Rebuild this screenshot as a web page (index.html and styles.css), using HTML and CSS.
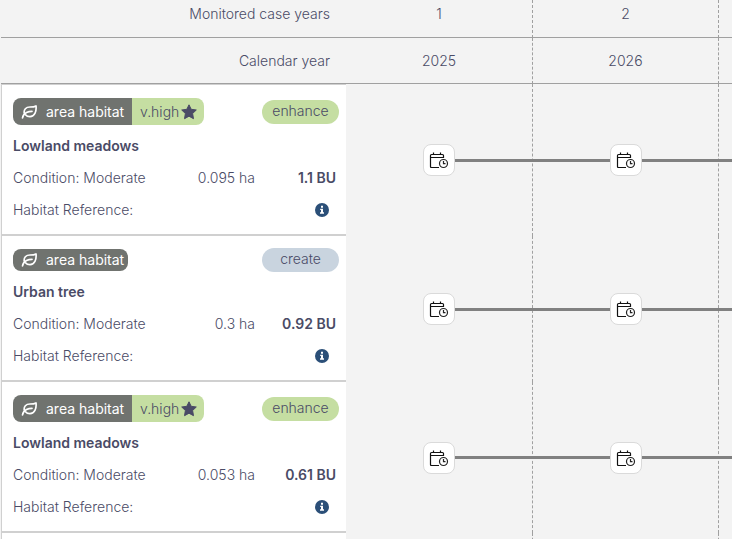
FILE: index.html
```html
<!DOCTYPE html>
<html lang="en">
<head>
<meta charset="utf-8">
<title>Monitoring timeline</title>
<link rel="stylesheet" href="styles.css">
</head>
<body>
<svg class="defs" aria-hidden="true">
  <symbol id="leaf" viewBox="0 0 16 14">
    <path d="M1 13C1.300 10.500 3 8.500 5 7.500C7 6.500 8.500 6.300 10.500 6.300M2.800 8.500C2 4.500 4.500 2 8.500 2C11 2 13 1.800 14.500 .9C15.200 6.500 13 11.600 8.500 11.600C6.500 11.600 5 11 4 9.700" fill="none" stroke="currentColor" stroke-width="1.700" stroke-linecap="round" stroke-linejoin="round"/>
  </symbol>
  <symbol id="star" viewBox="0 0 16 16">
    <path d="M8 .8L10.200 5.300L15.300 6L11.600 9.500L12.500 14.700L8 12.200L3.500 14.700L4.400 9.500L.7 6L5.800 5.300Z" fill="currentColor" stroke="currentColor" stroke-linejoin="round"/>
  </symbol>
  <symbol id="info" viewBox="0 0 14 14">
    <circle cx="7" cy="7" r="7" fill="#2b4f78"/>
    <path d="M6 2.700h2v2H6zM5.200 5.700H8v3.500h1v1.500H5V9.200h1V7.100h-.8z" fill="#fff"/>
  </symbol>
  <symbol id="schedule" viewBox="0 0 20 18">
    <path d="M10 16.500H2.500Q1.500 16.500 1.500 15.500V4.500Q1.500 3.500 2.500 3.500H13.500Q14.500 3.500 14.500 4.500V7M1.500 6.500H14.500M4.500 1.500V3.500M11.500 1.500V3.500" fill="none" stroke="#111" stroke-width="1.200"/>
    <circle cx="14.500" cy="12.500" r="4" fill="#fff" stroke="#222" stroke-width="1.200"/>
    <path d="M14.500 10V12.700H16.500" fill="none" stroke="#222" stroke-width="1.200"/>
  </symbol>
</svg>
<table class="timeline">
  <colgroup><col class="col-label"><col class="col-first"><col class="col-year"><col></colgroup>
  <thead>
    <tr class="row-case"><th scope="row">Monitored case years</th><td>1</td><td>2</td><td></td></tr>
    <tr class="row-calendar"><th scope="row">Calendar year</th><td>2025</td><td>2026</td><td></td></tr>
  </thead>
  <tbody>
    <tr>
      <th scope="row">
        <div class="card">
          <div class="tags rated">
            <span class="badge"><span class="kind"><svg class="leaf"><use href="#leaf"/></svg>area habitat</span><span class="rating">v.high<svg class="star"><use href="#star"/></svg></span></span>
            <span class="pill enhance">enhance</span>
          </div>
          <div class="name">Lowland meadows</div>
          <div class="facts"><span>Condition: Moderate</span><span class="area">0.095 ha</span><span class="units">1.1 BU</span></div>
          <div class="reference"><span>Habitat Reference:</span><button class="info" aria-label="Habitat reference details"><svg><use href="#info"/></svg></button></div>
        </div>
      </th>
      <td><div class="track first"><button class="event" aria-label="Monitoring 2025"><svg><use href="#schedule"/></svg></button></div></td>
      <td><div class="track"><button class="event" aria-label="Monitoring 2026"><svg><use href="#schedule"/></svg></button></div></td>
      <td><div class="track"></div></td>
    </tr>
    <tr>
      <th scope="row">
        <div class="card">
          <div class="tags">
            <span class="badge"><span class="kind"><svg class="leaf"><use href="#leaf"/></svg>area habitat</span></span>
            <span class="pill create">create</span>
          </div>
          <div class="name">Urban tree</div>
          <div class="facts"><span>Condition: Moderate</span><span class="area">0.3 ha</span><span class="units">0.92 BU</span></div>
          <div class="reference"><span>Habitat Reference:</span><button class="info" aria-label="Habitat reference details"><svg><use href="#info"/></svg></button></div>
        </div>
      </th>
      <td><div class="track first"><button class="event" aria-label="Monitoring 2025"><svg><use href="#schedule"/></svg></button></div></td>
      <td><div class="track"><button class="event" aria-label="Monitoring 2026"><svg><use href="#schedule"/></svg></button></div></td>
      <td><div class="track"></div></td>
    </tr>
    <tr>
      <th scope="row">
        <div class="card">
          <div class="tags rated">
            <span class="badge"><span class="kind"><svg class="leaf"><use href="#leaf"/></svg>area habitat</span><span class="rating">v.high<svg class="star"><use href="#star"/></svg></span></span>
            <span class="pill enhance">enhance</span>
          </div>
          <div class="name">Lowland meadows</div>
          <div class="facts"><span>Condition: Moderate</span><span class="area">0.053 ha</span><span class="units">0.61 BU</span></div>
          <div class="reference"><span>Habitat Reference:</span><button class="info" aria-label="Habitat reference details"><svg><use href="#info"/></svg></button></div>
        </div>
      </th>
      <td><div class="track first"><button class="event" aria-label="Monitoring 2025"><svg><use href="#schedule"/></svg></button></div></td>
      <td><div class="track"><button class="event" aria-label="Monitoring 2026"><svg><use href="#schedule"/></svg></button></div></td>
      <td><div class="track"></div></td>
    </tr>
    <tr class="next">
      <th scope="row"><div class="card empty"></div></th>
      <td></td><td></td><td></td>
    </tr>
  </tbody>
</table>
</body>
</html>
```
FILE: styles.css
```css
* { box-sizing: border-box; }
body {
  margin: 0;
  overflow: hidden;
  background: #f3f3f3;
  color: #4a4b66;
  font: 300 14px/20px Inter, sans-serif;
}
.defs { position: absolute; width: 0; height: 0; }
.timeline {
  width: 100%;
  table-layout: fixed;
  border-collapse: separate;
  border-spacing: 0;
  padding-left: 1px;
}
.col-label { width: 345px; }
.col-first { width: 187px; }
.col-year { width: 186px; }
th, td { padding: 0; font-weight: 300; text-align: center; }
td { border-right: 1px dashed #a0a0a0; }
td:last-child { border-right: 0; }
thead th, thead td { border-bottom: 1px solid #a0a0a0; }
thead th { padding-right: 16px; text-align: right; }
.row-case th, .row-case td { height: 38px; padding-bottom: 9px; }
.row-calendar th, .row-calendar td { height: 46px; }
tbody th { text-align: left; }
tbody tr:first-child .card { border-top: 1px solid #d0d0d0; }
.card {
  padding: 12px 7px 8px 11px;
  background: #fff;
  border-left: 1px solid #d0d0d0;
  border-bottom: 2px solid #d0d0d0;
}
.card.empty { height: 20px; }
.tags {
  display: flex;
  align-items: center;
  justify-content: space-between;
  height: 24px;
  margin-bottom: 4px;
}
.tags.rated { height: 29px; }
.badge {
  display: flex;
  height: 22px;
  overflow: hidden;
  border-radius: 8px;
}
.rated .badge { height: 27px; }
.kind, .rating { display: flex; align-items: center; }
.kind {
  width: 115px;
  padding-left: 8px;
  background: #70736f;
  color: #fff;
  font-weight: 400;
  white-space: nowrap;
}
.rated .kind { width: 119px; }
.leaf { flex: none; width: 17px; height: 14px; margin-right: 8px; }
.rating { width: 72px; padding-left: 8px; gap: 2px; background: #c5dea2; }
.star { flex: none; width: 16px; height: 16px; }
.pill {
  width: 77px;
  height: 24px;
  border-radius: 12px;
  line-height: 22px;
  text-align: center;
}
.enhance { background: #c5dea2; }
.create { background: #c9d4df; }
.name, .facts, .reference { height: 32px; line-height: 32px; }
.name { font-weight: 600; }
.facts {
  display: grid;
  grid-template-columns: 1fr 80px 81px;
  padding-right: 3px;
  white-space: nowrap;
}
.area, .units { text-align: right; }
.units { font-weight: 600; }
.reference {
  display: flex;
  align-items: center;
  justify-content: space-between;
  padding-right: 10px;
}
button { display: grid; place-items: center; padding: 0; cursor: pointer; }
.info { border: 0; background: none; }
.info svg { width: 14px; height: 14px; }
.track { display: flex; align-items: center; margin: 0 -1px; }
.track::before, .track::after {
  content: "";
  flex: 1;
  height: 3px;
  background: #808080;
}
.track.first::before { background: none; }
.event {
  width: 32px;
  height: 32px;
  background: #fff;
  border: 1px solid #dadada;
  border-radius: 8px;
}
.event svg { width: 20px; height: 18px; }
```
